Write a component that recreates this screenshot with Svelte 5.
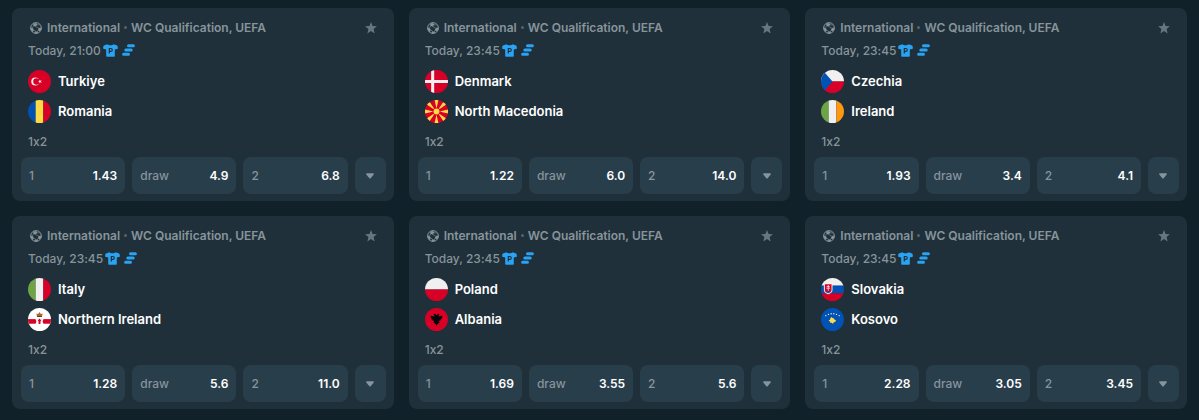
<script lang="ts">
   type Team = { name: string; flag: string };
   type Match = { time: string; home: Team; away: Team; odds: string[] };

   const outcomes: string[] = ["1", "draw", "2"];

   const matches: Match[] = [
      {
         time: "Today, 21:00",
         home: { name: "Turkiye", flag: "tr" },
         away: { name: "Romania", flag: "ro" },
         odds: ["1.43", "4.9", "6.8"],
      },
      {
         time: "Today, 23:45",
         home: { name: "Denmark", flag: "dk" },
         away: { name: "North Macedonia", flag: "mk" },
         odds: ["1.22", "6.0", "14.0"],
      },
      {
         time: "Today, 23:45",
         home: { name: "Czechia", flag: "cz" },
         away: { name: "Ireland", flag: "ie" },
         odds: ["1.93", "3.4", "4.1"],
      },
      {
         time: "Today, 23:45",
         home: { name: "Italy", flag: "it" },
         away: { name: "Northern Ireland", flag: "ni" },
         odds: ["1.28", "5.6", "11.0"],
      },
      {
         time: "Today, 23:45",
         home: { name: "Poland", flag: "pl" },
         away: { name: "Albania", flag: "al" },
         odds: ["1.69", "3.55", "5.6"],
      },
      {
         time: "Today, 23:45",
         home: { name: "Slovakia", flag: "sk" },
         away: { name: "Kosovo", flag: "xk" },
         odds: ["2.28", "3.05", "3.45"],
      },
   ];

   const tricolors: Record<string, string[]> = {
      ro: ["#0052b4", "#ffda44", "#d80027"],
      ie: ["#6da544", "#f0f0f0", "#ff9811"],
      it: ["#6da544", "#f0f0f0", "#d80027"],
   };

   const kosovoStars: number[][] = [[5, 8], [7.8, 6.7], [10.6, 6], [13.4, 6], [16.2, 6.7], [19, 8]];

   let favorites: boolean[] = $state(matches.map(() => false));

   const toggleFavorite = (index: number): void => {
      favorites[index] = !favorites[index];
   };
</script>

{#snippet flagIcon(code: string)}
   <svg class="flag" viewBox="0 0 24 24" aria-hidden="true">
      {#if tricolors[code]}
         <rect width="8" height="24" fill={tricolors[code][0]} />
         <rect x="8" width="8" height="24" fill={tricolors[code][1]} />
         <rect x="16" width="8" height="24" fill={tricolors[code][2]} />
      {:else if code === "tr"}
         <rect width="24" height="24" fill="#d80027" />
         <circle cx="7.6" cy="12" r="4.2" fill="#f0f0f0" />
         <circle cx="8.8" cy="12" r="3.3" fill="#d80027" />
         <path d="M11.9 9.9l.9 1.3 1.5-.4-.9 1.2.9 1.3-1.5-.5-.9 1.3v-1.6l-1.5-.5 1.5-.5z" fill="#f0f0f0" />
      {:else if code === "dk"}
         <rect width="24" height="24" fill="#d80027" />
         <path d="M6.4 0h3.2v24H6.4zM0 10.4h24v3.2H0z" fill="#f0f0f0" />
      {:else if code === "mk"}
         <rect width="24" height="24" fill="#d80027" />
         <path
            d="M10 0h4l-2 9zM10 24h4l-2-9zM0 10v4l9-2zM24 10v4l-9-2zM1.5 4.5l3-3L11 11zM22.5 4.5l-3-3L13 11zM1.5 19.5l3 3L11 13zM22.5 19.5l-3 3L13 13z"
            fill="#ffda44"
         />
         <circle cx="12" cy="12" r="4" fill="#d80027" />
         <circle cx="12" cy="12" r="3.1" fill="#ffda44" />
      {:else if code === "cz"}
         <rect width="24" height="12" fill="#f0f0f0" />
         <rect y="12" width="24" height="12" fill="#d80027" />
         <path d="M0 0h1.5L12 12 1.5 24H0z" fill="#0052b4" />
      {:else if code === "ni"}
         <rect width="24" height="24" fill="#fff" />
         <rect y="11.6" width="24" height="4.8" fill="#d80027" />
         <path d="M12 8.8l1.6 2.2 2.7.1-1.1 2.9 1.1 2.9-2.7.1L12 19.2l-1.6-2.2-2.7-.1L8.8 14l-1.1-2.9 2.7-.1z" fill="#fff" />
         <path d="M10.3 11.7l1 .7.1-1.2h1.2l.1 1.2 1-.7.1 1.1-.8 1.4v2.4h-2v-2.4l-.8-1.3z" fill="#d80027" />
         <path d="M8.8 5.8l1.8.5L12 4.2l1.4 2.1 1.8-.5-.6 3.7H9.4z" fill="#a56b29" />
         <path d="M9.7 8.4h4.6v1.1H9.7z" fill="#5b3d23" />
      {:else if code === "pl"}
         <rect width="24" height="12" fill="#f0f0f0" />
         <rect y="12" width="24" height="12" fill="#d80027" />
      {:else if code === "al"}
         <rect width="24" height="24" fill="#d80027" />
         <path
            d="M12 7.5L10.4 6 8.8 6.6l1 1.2-.2 1.1-4-.9.8 1.6-.7.5 1.4.9-.5.8 1.6.5-.3.9 1.9.1-1.3 2.4 1.8-.2-.2 1.6 1.1-.4.8 2.3.8-2.3 1.1.4-.2-1.6 1.8.2-1.3-2.4 1.9-.1-.3-.9 1.6-.5-.5-.8 1.4-.9-.7-.5.8-1.6-4 .9-.2-1.1 1-1.2-1.6-.6z"
            fill="#050505"
         />
      {:else if code === "sk"}
         <rect width="24" height="8" fill="#f0f0f0" />
         <rect y="8" width="24" height="8" fill="#0052b4" />
         <rect y="16" width="24" height="8" fill="#d80027" />
         <path d="M3 5.5h9v7c0 3-4.5 4.5-4.5 4.5S3 15.5 3 12.5z" fill="#f0f0f0" />
         <path d="M4 6.5h7v6c0 1-.5 1.7-1.2 2.3H5.2C4.5 14.2 4 13.5 4 12.5z" fill="#d80027" />
         <path d="M5.2 14.7c1-1.2 1.5-.9 2.3-1.5.8.6 1.3.3 2.3 1.5-1 .8-2.3 1.3-2.3 1.3s-1.3-.5-2.3-1.3z" fill="#0052b4" />
         <path d="M7.1 7.3h.8v1h1.2v.8H7.9v1.1h1.6v.8H7.9v2.3h-.8V11H5.5v-.8h1.6V9.1H5.9v-.8h1.2z" fill="#f0f0f0" />
      {:else if code === "xk"}
         <rect width="24" height="24" fill="#0052b4" />
         {#each kosovoStars as [cx, cy]}
            <circle {cx} {cy} r=".7" fill="#f0f0f0" />
         {/each}
         <path d="M11 9.5l1.5 1.2 1.2.2.5 1.3 1.5.6-.9 1.7-1.5.4-.8 1.9-1.2-1.5-1.6.1-.7-1.6-1.2-.8 1.6-.7.3-1.7z" fill="#ffda44" />
      {/if}
   </svg>
{/snippet}

<main class="matches">
   {#each matches as match, index}
      <article class="card">
         <header class="league">
            <svg class="ball" viewBox="0 0 12 12" aria-hidden="true">
               <circle cx="6" cy="6" r="5.4" fill="none" stroke="currentColor" stroke-width="1" />
               <path
                  d="M3.2 1.4L6.3 1l.9 1.7-1.5 1.7-2.3-.5zM.7 5.6l1.9.3 1.3 2-1 2.2-1.2-.8C1 8.3.6 7 .7 5.6zM8.7 6l2.6-.6c.1 1.6-.4 2.9-1.3 3.9L7.8 8.5zM5.3 9.3l2.3.5.2 1.4c-1.1.4-2.3.4-3.4 0z"
                  fill="currentColor"
               />
               <path d="M7 2.7l2.6.3M5.5 4.3l3.3 1.9M3.6 3.7l-1.1 2.2M3.7 8l1.9 1.5M7.9 8.4l-.5 1.5" stroke="currentColor" stroke-width=".6" />
            </svg>
            <span>International</span>
            <i class="dot"></i>
            <span>WC Qualification, UEFA</span>
            <button
               class="favorite"
               class:active={favorites[index]}
               aria-label="Favorite"
               aria-pressed={favorites[index]}
               onclick={() => toggleFavorite(index)}
            >
               <svg viewBox="0 0 12 12" width="12" height="12">
                  <path d="M6 .1l1.6 3.9 4.3.3-3.3 2.8 1 4.3L6 9.1l-3.600 2.300 1-4.300L.1 4.300 4.400 4z" fill="currentColor" />
               </svg>
            </button>
         </header>

         <div class="time">
            <time>{match.time}</time>
            <div class="features">
               <svg class="shirt" viewBox="0 0 15 13" aria-hidden="true">
                  <path
                     d="M4.500.3C5.500 1.700 9.500 1.700 10.500.3l3 .9c.8.3 1.300 1 1.300 1.800v1.800l-3 .7V12c0 .5-.3.800-.8.800H4c-.5 0-.8-.3-.8-.8V5.500l-3-.7V3c0-.8.500-1.500 1.300-1.800z"
                     fill="#2aa3f4"
                  />
                  <path d="M6.300 9.500V4.500h1.500a1.400 1.400 0 0 1 0 2.900H6.300" fill="none" stroke="#1f303a" stroke-width="1.200" />
               </svg>
               <svg class="builder" viewBox="0 0 13 12" aria-hidden="true">
                  <path d="M6.500 1.700h4.900M3.800 5.900h5.400M1.600 10.200h4.900" stroke="#2aa3f4" stroke-width="3" stroke-linecap="round" />
               </svg>
            </div>
         </div>

         <div class="teams">
            {#each [match.home, match.away] as team}
               <div class="team">
                  {@render flagIcon(team.flag)}
                  <span>{team.name}</span>
               </div>
            {/each}
         </div>

         <div class="market">1x2</div>

         <div class="odds">
            {#each match.odds as odd, i}
               <button class="odd">
                  <span class="outcome">{outcomes[i]}</span>
                  <span>{odd}</span>
               </button>
            {/each}
            <button class="more" aria-label="More markets">
               <svg viewBox="0 0 8 6" width="8" height="6">
                  <path d="M.9.3h6.200c.7 0 1 .7.600 1.200L4.700 5.200c-.4.500-1 .5-1.400 0L.3 1.500C-.1 1 .2.300.9.300z" fill="currentColor" />
               </svg>
            </button>
         </div>
      </article>
   {/each}
</main>

<style>
   :global(body) {
      margin: 0;
      background: #11212a;
   }

   .matches {
      display: grid;
      grid-template-columns: repeat(3, 1fr);
      gap: 15px;
      padding: 8px 12px;
      color: #fff;
      font-family: Inter, "Noto Sans", sans-serif;
      font-size: 12px;
      font-weight: 500;
      font-variant-ligatures: no-contextual;
   }

   .card {
      padding: 8px 8px 7px 9px;
      border-radius: 8px;
      background: #1f303a;
   }

   button {
      padding: 0;
      border: 0;
      color: inherit;
      font: inherit;
      cursor: pointer;
   }

   .league,
   .time {
      display: flex;
      align-items: center;
      color: #87949b;
   }

   .league {
      height: 23px;
      gap: 4px;
      padding: 0 9px 0 8px;
      font-weight: 600;
   }

   .ball {
      width: 12px;
      height: 12px;
      margin: 0 1px;
   }

   .dot {
      width: 3px;
      height: 3px;
      border-radius: 50%;
      background: #56646d;
   }

   .favorite {
      display: flex;
      margin-left: auto;
      background: none;
      color: #667680;
   }

   .favorite.active {
      color: #ffda44;
   }

   .time {
      height: 22px;
      gap: 2px;
      padding: 0 7px;
   }

   .features {
      display: flex;
      align-items: center;
      gap: 4px;
   }

   .shirt {
      width: 15px;
      height: 13px;
   }

   .builder {
      width: 13px;
      height: 12px;
   }

   .teams {
      margin-top: 5px;
      padding: 0 7px;
   }

   .team {
      display: flex;
      align-items: center;
      gap: 7px;
      height: 30px;
      font-size: 13px;
      font-weight: 600;
   }

   .flag {
      width: 23px;
      height: 23px;
      border-radius: 50%;
   }

   .market {
      padding: 0 7px;
      color: #87949b;
      line-height: 31px;
   }

   .odds {
      display: flex;
      gap: 7px;
      height: 37px;
   }

   .odd,
   .more {
      display: flex;
      align-items: center;
      border-radius: 8px;
      background: #293e4b;
   }

   .odd {
      flex: 1;
      justify-content: space-between;
      padding: 0 8px;
      font-weight: 600;
   }

   .outcome {
      color: #87949b;
      font-weight: 500;
   }

   .more {
      justify-content: center;
      width: 31px;
      color: #87949b;
   }
</style>
